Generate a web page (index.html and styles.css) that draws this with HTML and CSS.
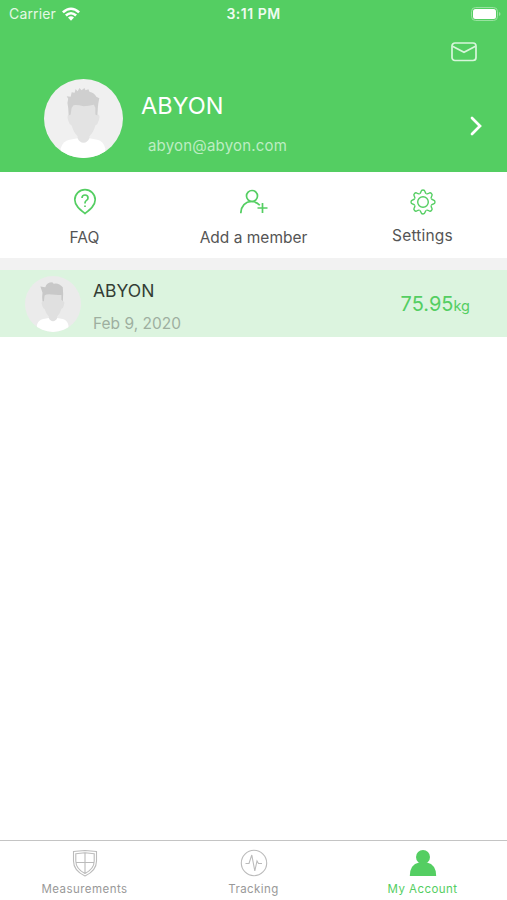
FILE: index.html
```html
<!DOCTYPE html>
<html lang="en">
<head>
  <meta charset="UTF-8">
  <meta name="viewport" content="width=device-width, initial-scale=1.0">
  <title>My Account</title>
  <link rel="stylesheet" href="styles.css">
</head>
<body>
  <div class="app">
    <header class="header">
      <div class="status-bar">
        <div class="status-left">
          <span class="carrier">Carrier</span>
          <svg class="wifi" width="18" height="14" viewBox="0 0 18 14">
            <path d="M0 4.4Q9-3.6 18 4.4L16.2 6.3Q9-.1 1.8 6.3Z"/>
            <path d="M3 7.5Q9 2.3 15 7.5L13.2 9.4Q9 5.8 4.8 9.4Z"/>
            <path d="M6 10.6Q9 8 12 10.6L9 13.7Z"/>
          </svg>
        </div>
        <div class="time">3:11 PM</div>
        <div class="status-right">
          <svg width="30" height="14" viewBox="0 0 30 14">
            <rect class="battery-case" x=".5" y=".5" width="26" height="13" rx="4"/>
            <rect class="battery-fill" x="2" y="2" width="23" height="10" rx="2.5"/>
            <path class="battery-tip" d="M28 5v4q1.500-.6 1.500-2t-1.500-2Z"/>
          </svg>
        </div>
      </div>

      <div class="mail-row">
        <svg width="26" height="20" viewBox="0 0 26 20">
          <rect x="1" y="1" width="24" height="17.500" rx="3"/>
          <path d="M1.500 4.200L13 10.200L24.500 4.200"/>
        </svg>
      </div>

      <div class="profile">
        <svg class="avatar" viewBox="0 0 80 80">
          <defs>
            <clipPath id="round"><circle cx="40" cy="40" r="40"/></clipPath>
          </defs>
          <g clip-path="url(#round)">
            <rect width="80" height="80" fill="#f0f0f0"/>
            <path fill="#fff" d="M17 80V70Q19 63 26 61.500L34 60H46L54 61.500Q60 63 62 70V80Z"/>
            <path fill="#e3e3e3" d="M26 24H54V36Q57.500 36 55.500 42Q54.500 46 52 47Q50 54 46 58V60Q44 64.500 40 64.500Q36 64.500 34 60V58Q30 54 28 47Q25.500 46 24.500 42Q22.500 36 26 36Z"/>
            <path fill="#cfcfcf" d="M25 37L24.500 29Q23 24 24.500 20L23 17.500L27 18L28 13.500L31 14L32 10L34 12.500L36 9L38 11.500L41 9L42 11.500L45 10.500L46 13Q51 14 53 18L56 19.500Q55 24 54.500 29L54 37L52 36V29L50.500 26Q45 27.500 40 27.500Q34 26 30 26.500L28 29L27 36Z"/>
          </g>
        </svg>
        <div class="profile-info">
          <div class="profile-name">ABYON</div>
          <div class="profile-email">abyon@abyon.com</div>
        </div>
        <svg class="chevron" width="12" height="20" viewBox="0 0 12 20">
          <path d="M2 2L10 10L2 18"/>
        </svg>
      </div>
    </header>

    <nav class="actions">
      <div class="action">
        <svg width="28" height="28" viewBox="0 0 28 28">
          <path d="M14 25.500C9 21.500 3.800 17.500 3.800 11.800A10.200 10.200 0 0 1 24.200 11.800C24.200 17.500 19 21.500 14 25.500Z"/>
          <path d="M11 10Q11 7 14 7T17 9.900Q17 11.400 15.500 12.400T14 14.900V15.400"/>
          <path d="M14 17.400V18.900"/>
        </svg>
        <span>FAQ</span>
      </div>
      <div class="action">
        <svg width="28" height="28" viewBox="0 0 28 28">
          <circle cx="12" cy="8" r="5.500"/>
          <path d="M.8 25.300C1 18 5.500 13.500 11.500 13.500Q16.500 13.500 19.800 17.200"/>
          <path d="M22.500 15V25M17.500 20H27.500"/>
        </svg>
        <span>Add a member</span>
      </div>
      <div class="action settings">
        <svg class="gear" width="28" height="28" viewBox="-14 -14 28 28">
          <defs>
            <path id="tooth" d="M-3.440-8.310C-2.300-8.700-2.200-9.400-2-10.400Q-1.700-12 0-12T2-10.400C2.200-9.400 2.300-8.700 3.440-8.310"/>
          </defs>
          <use href="#tooth"/>
          <use href="#tooth" transform="rotate(45)"/>
          <use href="#tooth" transform="rotate(90)"/>
          <use href="#tooth" transform="rotate(135)"/>
          <use href="#tooth" transform="rotate(180)"/>
          <use href="#tooth" transform="rotate(225)"/>
          <use href="#tooth" transform="rotate(270)"/>
          <use href="#tooth" transform="rotate(315)"/>
          <circle r="5.300"/>
        </svg>
        <span>Settings</span>
      </div>
    </nav>

    <main class="members">
      <div class="member">
        <svg class="member-avatar" viewBox="0 0 80 80">
          <g clip-path="url(#round)">
            <rect width="80" height="80" fill="#ebebeb"/>
            <path fill="#fff" d="M17 80V70Q19 63 26 61.500L34 60H46L54 61.500Q60 63 62 70V80Z"/>
            <path fill="#e0e0e0" d="M26 24H54V36Q57.500 36 55.500 42Q54.500 46 52 47Q50 54 46 58V60Q44 64.500 40 64.500Q36 64.500 34 60V58Q30 54 28 47Q25.500 46 24.500 42Q22.500 36 26 36Z"/>
            <path fill="#c8c8c8" d="M25 36Q24 30 25 24L22 15L29 16Q31 9 39 9L41 11Q48 9 54 16Q55 24 54 36L52 34V27Q46 27.500 38 26.500Q31 25.500 28 28L27 36Z"/>
          </g>
        </svg>
        <div class="member-info">
          <div class="member-name">ABYON</div>
          <div class="member-date">Feb 9, 2020</div>
        </div>
        <div class="weight">75.95<span>kg</span></div>
      </div>
    </main>

    <footer class="tab-bar">
      <div class="tab">
        <svg width="28" height="28" viewBox="0 0 28 28">
          <path d="M14 1.500Q8 2.200 2.500 2.500V12C2.500 19.500 7.500 24 14 27C20.500 24 25.500 19.500 25.500 12V2.500Q20 2.200 14 1.500Z"/>
          <path d="M14 3.800Q9 4.500 4.800 4.700V12C4.800 18 8.500 21.700 14 24.500C19.500 21.700 23.200 18 23.200 12V4.700Q19 4.500 14 3.800ZM14 4V24M5 13.500H23"/>
        </svg>
        <span>Measurements</span>
      </div>
      <div class="tab">
        <svg width="28" height="28" viewBox="0 0 28 28">
          <circle cx="14" cy="14" r="12.700"/>
          <path d="M5.500 14.500H9L11.800 6L14.800 22L17 12L18.500 14.500H22"/>
        </svg>
        <span>Tracking</span>
      </div>
      <div class="tab active">
        <svg width="28" height="28" viewBox="0 0 28 28">
          <circle cx="14" cy="8" r="7"/>
          <path d="M.8 27Q.8 15.500 10 13.500H18Q27.200 15.500 27.200 27Z"/>
        </svg>
        <span>My Account</span>
      </div>
    </footer>
  </div>
</body>
</html>
```
FILE: styles.css
```css
* {
  box-sizing: border-box;
}

body {
  margin: 0;
  background: #fff;
  font-family: Inter, "Liberation Sans", sans-serif;
}

svg {
  display: block;
  flex-shrink: 0;
}

.app {
  display: flex;
  flex-direction: column;
  height: 900px;
  overflow: hidden;
}

/* Header */
.header {
  height: 172px;
  background-color: #54ce62;
  color: #fff;
}

.status-bar {
  display: grid;
  grid-template-columns: 1fr auto 1fr;
  align-items: center;
  height: 27px;
  padding: 0 6px 0 9px;
}

.status-left {
  display: flex;
  align-items: center;
  gap: 6px;
}

.carrier {
  font-size: 14px;
  letter-spacing: 0.15px;
  color: #e4f8e5;
}

.wifi {
  fill: #fff;
}

.time {
  margin-left: -3px;
  font-size: 14px;
  font-weight: 600;
  letter-spacing: 0.5px;
  color: #effbf0;
}

.status-right {
  display: flex;
  justify-content: flex-end;
}

.battery-case {
  fill: none;
  stroke: #98e2a0;
}

.battery-fill {
  fill: #fff;
}

.battery-tip {
  fill: #98e2a0;
}

.mail-row {
  display: flex;
  justify-content: flex-end;
  padding: 15px 30px 0 0;
}

.mail-row svg {
  fill: none;
  stroke: #d8f6db;
  stroke-width: 1.7;
}

.profile {
  display: flex;
  align-items: center;
  padding: 17px 25px 0 44px;
}

.avatar {
  width: 79px;
  height: 79px;
}

.profile-info {
  flex: 1;
  padding: 10px 0 0 18px;
}

.profile-name {
  font-size: 23.5px;
  line-height: 30px;
}

.profile-email {
  margin-top: 15px;
  padding-left: 7px;
  font-size: 15px;
  line-height: 20px;
  letter-spacing: 0.2px;
  color: #bdedc2;
}

.chevron {
  margin-top: 14px;
  fill: none;
  stroke: #fff;
  stroke-width: 2.7;
  stroke-linecap: round;
}

/* Actions */
.actions {
  display: grid;
  grid-template-columns: repeat(3, 1fr);
  height: 98px;
  padding-top: 16px;
  border-bottom: 12px solid #f2f2f2;
}

.action {
  display: flex;
  flex-direction: column;
  align-items: center;
  font-size: 15.5px;
  line-height: 20px;
  color: #555;
}

.action svg {
  margin-bottom: 12px;
  fill: none;
  stroke: #54ce62;
  stroke-width: 1.7;
}

.action .gear {
  margin-bottom: 10px;
  stroke-width: 1.4;
}

.settings {
  letter-spacing: 0.2px;
}

/* Member list */
.members {
  flex: 1;
}

.member {
  display: flex;
  align-items: center;
  height: 67px;
  padding: 0 37px 0 25px;
  background-color: #dcf4df;
}

.member-avatar {
  width: 56px;
  height: 56px;
}

.member-info {
  flex: 1;
  padding: 6px 0 0 12px;
}

.member-name {
  font-size: 17.5px;
  line-height: 22px;
  color: #333d34;
}

.member-date {
  margin-top: 12px;
  font-size: 15.5px;
  line-height: 20px;
  color: #9eaf9f;
}

.weight {
  font-size: 20px;
  color: #54ce62;
}

.weight span {
  font-size: 14.5px;
}

/* Tab bar */
.tab-bar {
  display: grid;
  grid-template-columns: repeat(3, 1fr);
  height: 60px;
  padding-top: 8px;
  border-top: 1px solid #c4c4c4;
}

.tab {
  display: flex;
  flex-direction: column;
  align-items: center;
  font-size: 11.5px;
  line-height: 16px;
  letter-spacing: 0.45px;
  color: #999;
}

.tab svg {
  margin-bottom: 4px;
  fill: none;
  stroke: #bbb;
  stroke-width: 1.1;
}

.tab.active {
  color: #54ce62;
}

.tab.active svg {
  fill: #54ce62;
  stroke: none;
}
```
